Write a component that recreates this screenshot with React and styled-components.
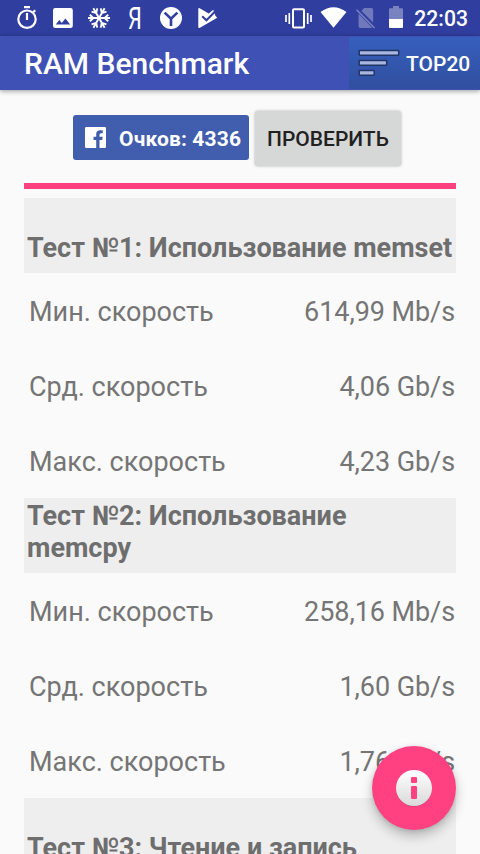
import React from 'react'
import styled, { createGlobalStyle } from 'styled-components';


const GlobalStyle = createGlobalStyle`
    body {
        margin: 0;
        background-color: #fafafa;
        font-family: Roboto, sans-serif;
        overflow: hidden;
    }
`

const Screen = styled.div`
    position: relative;
    width: 480px;
    height: 854px;
    overflow: hidden;
    background-color: #fafafa;
`

const StatusBar = styled.div`
    height: 36px;
    box-sizing: border-box;
    padding: 0 12px 0 17px;
    background-color: #303f9f;
    color: white;
    display: flex;
    justify-content: space-between;
`

const StatusGroup = styled.div`
    display: flex;
    height: 36px;
`

const StatusIcon = styled.svg`
    display: block;
    flex: none;
    width: ${props => props.$width}px;
    height: 36px;
    margin-right: ${props => props.$gap || 0}px;
`

const YandexLetter = styled.span`
    width: 12px;
    height: 36px;
    margin: 0 19px 0 0;
    display: flex;
    justify-content: center;
    font-size: 31px;
    font-weight: 400;
    line-height: 37px;
    transform: scaleX(0.7);
`

const Clock = styled.span`
    font-size: 21.2px;
    font-weight: 500;
    line-height: 38px;
`

const AppBar = styled.header`
    position: relative;
    height: 54px;
    box-sizing: border-box;
    padding-left: 24px;
    background-color: #3f51b5;
    box-shadow: 0 1px 5px rgba(0, 0, 0, 0.4);
    color: white;
    display: flex;
    align-items: center;
    justify-content: space-between;
`

const Title = styled.h1`
    margin: 0;
    padding-top: 2px;
    font-size: 30px;
    font-weight: 500;
    line-height: 52px;
`

const TopButton = styled.button`
    width: 131px;
    height: 52px;
    box-sizing: border-box;
    padding: 0 0 0 9px;
    border: 0;
    background: linear-gradient(#365fbd, #304f9f);
    color: white;
    font: 500 21px/54px Roboto, sans-serif;
    display: flex;
    align-items: center;
    gap: 6px;
`

const TopLabel = styled.span`
    padding-top: 2px;
`

const Actions = styled.div`
    height: 93px;
    box-sizing: border-box;
    padding: 20px 0 0 73px;
    display: flex;
    align-items: flex-start;
    gap: 6px;
`

const ShareButton = styled.button`
    width: 176px;
    height: 45px;
    margin-top: 5px;
    box-sizing: border-box;
    padding: 0 0 0 12px;
    border: 0;
    border-radius: 3px;
    background-color: #415dae;
    color: white;
    font: 700 21px/42px Roboto, sans-serif;
    letter-spacing: 0.15px;
    white-space: nowrap;
    display: flex;
    align-items: center;
    gap: 13px;
`

const ShareLabel = styled.span`
    padding-top: 3px;
`

const CheckButton = styled.button`
    width: 146px;
    height: 55px;
    margin-top: 1px;
    padding: 2px 0 0;
    border: 0;
    border-radius: 3px;
    background-color: #d6d7d7;
    box-shadow: 0 0 3px rgba(0, 0, 0, 0.3);
    color: #212121;
    font: 500 21px/53px Roboto, sans-serif;
`

const Progress = styled.div`
    height: 6px;
    margin: 0 24px 9px;
    background-color: #ff4081;
`

const Results = styled.main`
    margin: 0 24px;
    color: #757575;
    font-size: 27px;
`

const TestTitle = styled.h2`
    height: 75px;
    margin: 0;
    box-sizing: border-box;
    padding: 0 3px 9px;
    background-color: #eeeeee;
    color: #6e6e6e;
    font-size: 27px;
    font-weight: 700;
    line-height: 32px;
    display: flex;
    align-items: flex-end;
`

const Row = styled.div`
    height: 75px;
    box-sizing: border-box;
    padding: 1px 1px 0 5px;
    line-height: 76px;
    display: flex;
    justify-content: space-between;
`

const Value = styled.span`
    letter-spacing: -0.07px;
`

const InfoButton = styled.button`
    position: absolute;
    right: 24px;
    bottom: 24px;
    width: 84px;
    height: 84px;
    padding: 0;
    border: 0;
    border-radius: 50%;
    background-color: #ff4081;
    box-shadow: 0 6px 12px rgba(0, 0, 0, 0.24), 0 1px 4px rgba(0, 0, 0, 0.1);
    display: flex;
    align-items: center;
    justify-content: center;
`

const tests = [
  { title: 'Тест №1: Использование memset', min: '614,99 Mb/s', avg: '4,06 Gb/s', max: '4,23 Gb/s' },
  { title: 'Тест №2: Использование memcpy', min: '258,16 Mb/s', avg: '1,60 Gb/s', max: '1,76 Gb/s' },
  { title: 'Тест №3: Чтение и запись' },
]

const Notifications = () => (
  <StatusGroup>
    <StatusIcon $width={20} $gap={16} viewBox="0 0 20 36" fill="none" stroke="white">
      <circle cx="10" cy="19.2" r="8.7" strokeWidth="2.2" />
      <path d="M7 7.2h6M10 13v7M16.2 12.2l2-2" strokeWidth="2.2" />
    </StatusIcon>
    <StatusIcon $width={20} $gap={15} viewBox="0 0 20 36">
      <path fill="white" fillRule="evenodd" d="M2.2 8h15.4a2.2 2.2 0 0 1 2.2 2.2v15.6a2.2 2.2 0 0 1-2.2 2.2H2.2A2.2 2.2 0 0 1 0 25.8V10.2A2.2 2.2 0 0 1 2.2 8zM2.8 24.6h14.4l-4.8-6.2-3.6 4.5-2.5-2.9z" />
    </StatusIcon>
    <StatusIcon $width={22} $gap={19} viewBox="0 0 22 36" fill="none" stroke="white" strokeWidth="1.9">
      {[30, 90, 150, 210, 270, 330].map(angle => (
        <path key={angle} transform={`rotate(${angle} 11 18)`} d="M11 18V6.8M7.7 8.8l3.3 3.6 3.3-3.6" />
      ))}
    </StatusIcon>
    <YandexLetter>Я</YandexLetter>
    <StatusIcon $width={22} $gap={16} viewBox="0 0 22 36" fill="none">
      <circle cx="11" cy="18" r="11" fill="white" />
      <path d="M4.6 12.6l6.4 6 6.4-6M11 18v8" stroke="#303f9f" strokeWidth="2.6" />
    </StatusIcon>
    <StatusIcon $width={20} viewBox="0 0 20 36">
      <path fill="white" d="M1.2 8L12 14.3 16.2 11.7l1.2 4 1.8 2L1.5 28q-1.2.2-1.2-1V9q0-1 .9-1z" />
      <path d="M4.2 16.3l4.2 4 8.2-8.3" fill="none" stroke="#303f9f" strokeWidth="2" />
      <path d="M11.5 14.2l4-3.7" fill="none" stroke="white" strokeWidth="1.7" />
    </StatusIcon>
  </StatusGroup>
)

const SystemIcons = () => (
  <StatusGroup>
    <StatusIcon $width={27} $gap={8} viewBox="0 0 27 36" fill="none" stroke="white" strokeWidth="2">
      <rect x="8" y="9.2" width="11" height="18.4" rx="1" />
      <path d="M1 15v7M4.3 13v11M22.7 13v11M26 15v7" strokeWidth="1.7" />
    </StatusIcon>
    <StatusIcon $width={27} $gap={9} viewBox="0 0 27 36">
      <path fill="white" d="M.5 12Q13.5 2.5 26.5 12L13.5 27.8z" />
    </StatusIcon>
    <StatusIcon $width={20} $gap={13} viewBox="0 0 20 36">
      <path fill="#6f79bc" d="M8 8h7.5q1.6 0 1.6 1.6V22.500L5.500 11zM2.600 13.800L16 27.500q-.4.400-1 .4H4.200q-1.600 0-1.600-1.600z" />
      <path d="M.5 9.700l18 18.300" stroke="#7983bf" strokeWidth="1.600" />
    </StatusIcon>
    <StatusIcon $width={14} $gap={11} viewBox="0 0 14 36">
      <path fill="#7983bf" d="M4 6h6v2.2h3q1 0 1 1V19H0V9.2q0-1 1-1h3z" />
      <path fill="white" d="M0 19h14v8q0 1-1 1H1q-1 0-1-1z" />
    </StatusIcon>
    <Clock>22:03</Clock>
  </StatusGroup>
)

const SortIcon = () => (
  <svg width="42" height="28" viewBox="0 0 42 28" fill="#a9b6df" stroke="#203567" strokeWidth="1.5">
    <rect x="1.2" y="1.5" width="39.5" height="4.7" rx=".6" />
    <rect x="1.2" y="11.5" width="27.5" height="4.7" rx=".6" />
    <rect x="1.2" y="21.5" width="15" height="4.7" rx=".6" />
  </svg>
)

const FacebookIcon = () => (
  <svg width="21" height="21" viewBox="0 0 21 21">
    <path fill="white" d="M1.2 0h18.6Q21 0 21 1.2v18.6q0 1.2-1.2 1.2h-5.3v-8.1h2.7l.5-3.2h-3.2v-2q0-1.5 1.6-1.5h1.7V3.300h-2.600q-4 0-4 4v2.400H8.500v3.200h2.700V21h-10Q0 21 0 19.800V1.200Q0 0 1.200 0z" />
  </svg>
)

const InfoIcon = () => (
  <svg width="38" height="38" viewBox="0 0 38 38">
    <defs>
      <linearGradient id="info" x2="0" y2="1">
        <stop stopColor="#fff" />
        <stop offset="1" stopColor="#d9d9d9" />
      </linearGradient>
    </defs>
    <circle cx="19" cy="19.6" r="18" fill="#a54468" opacity=".65" />
    <circle cx="19" cy="19" r="18" fill="url(#info)" />
    <rect x="16" y="8" width="6" height="6" rx="1" fill="#ff4081" />
    <rect x="16" y="17" width="6" height="13" rx="1" fill="#ff4081" />
  </svg>
)

const App = () => {
  return (
    <Screen>
      <GlobalStyle />
      <StatusBar>
        <Notifications />
        <SystemIcons />
      </StatusBar>
      <AppBar>
        <Title>RAM Benchmark</Title>
        <TopButton><SortIcon /><TopLabel>TOP20</TopLabel></TopButton>
      </AppBar>
      <Actions>
        <ShareButton><FacebookIcon /><ShareLabel>Очков: 4336</ShareLabel></ShareButton>
        <CheckButton>ПРОВЕРИТЬ</CheckButton>
      </Actions>
      <Progress />
      <Results>
        {tests.map(test => (
          <section key={test.title}>
            <TestTitle>{test.title}</TestTitle>
            {test.min && (
              <>
                <Row><span>Мин. скорость</span><Value>{test.min}</Value></Row>
                <Row><span>Срд. скорость</span><Value>{test.avg}</Value></Row>
                <Row><span>Макс. скорость</span><Value>{test.max}</Value></Row>
              </>
            )}
          </section>
        ))}
      </Results>
      <InfoButton><InfoIcon /></InfoButton>
    </Screen>
  )
}

export default App
